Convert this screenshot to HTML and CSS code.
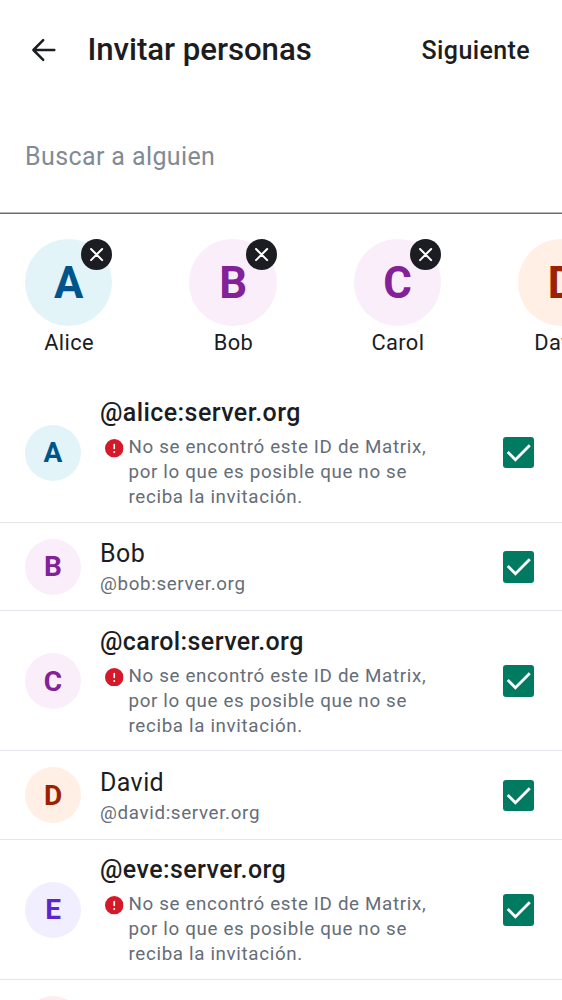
FILE: index.html
```html
<!DOCTYPE html>
<html lang="es">
<head>
<meta charset="utf-8">
<title>Invitar personas</title>
<link rel="stylesheet" href="styles.css">
</head>
<body>
<svg class="symbols" aria-hidden="true">
  <symbol id="close" viewBox="0 0 32 32"><path d="M10.3 10.3 21.7 21.7M21.7 10.3 10.3 21.7" fill="none" stroke="#fff" stroke-width="2.1" stroke-linecap="round"/></symbol>
  <symbol id="error" viewBox="0 0 18 18"><circle cx="9" cy="9" r="9" fill="#d51928"/><path d="M9 5.4V9.2" fill="none" stroke="#fff" stroke-width="1.6" stroke-linecap="round"/><circle cx="9" cy="12.7" r=".95" fill="#fff"/></symbol>
  <symbol id="check" viewBox="0 0 32 32"><path d="M4.8 15.2 12.6 23 27.2 8.4" fill="none" stroke="#fff" stroke-width="2.9"/></symbol>
</svg>
<main class="screen">
  <header class="topbar">
    <svg class="back" viewBox="0 0 26 26" role="img" aria-label="Atrás"><path d="M23.3 13H2.5M12.2 3.2 2.4 13l9.8 9.8" fill="none" stroke="#1b1d22" stroke-width="2.5" stroke-linecap="round" stroke-linejoin="round"/></svg>
    <h1 class="title">Invitar personas</h1>
    <span class="next">Siguiente</span>
  </header>
  <div class="search">Buscar a alguien</div>
  <section class="selected">
    <div class="person"><div class="avatar large blue">A<svg class="remove"><use href="#close"/></svg></div><span class="label">Alice</span></div>
    <div class="person"><div class="avatar large purple">B<svg class="remove"><use href="#close"/></svg></div><span class="label">Bob</span></div>
    <div class="person"><div class="avatar large purple">C<svg class="remove"><use href="#close"/></svg></div><span class="label">Carol</span></div>
    <div class="person"><div class="avatar large orange">D<svg class="remove"><use href="#close"/></svg></div><span class="label">David</span></div>
  </section>
  <section class="list">
    <div class="row tall">
      <div class="avatar blue">A</div>
      <div class="info"><div class="name strong">@alice:server.org</div><div class="warning"><svg class="error"><use href="#error"/></svg><p class="detail">No se encontró este ID de Matrix,<br>por lo que es posible que no se<br>reciba la invitación.</p></div></div>
      <svg class="checkbox"><use href="#check"/></svg>
    </div>
    <div class="row">
      <div class="avatar purple">B</div>
      <div class="info"><div class="name">Bob</div><div class="detail">@bob:server.org</div></div>
      <svg class="checkbox"><use href="#check"/></svg>
    </div>
    <div class="row tall">
      <div class="avatar purple">C</div>
      <div class="info"><div class="name strong">@carol:server.org</div><div class="warning"><svg class="error"><use href="#error"/></svg><p class="detail">No se encontró este ID de Matrix,<br>por lo que es posible que no se<br>reciba la invitación.</p></div></div>
      <svg class="checkbox"><use href="#check"/></svg>
    </div>
    <div class="row">
      <div class="avatar orange">D</div>
      <div class="info"><div class="name">David</div><div class="detail">@david:server.org</div></div>
      <svg class="checkbox"><use href="#check"/></svg>
    </div>
    <div class="row tall">
      <div class="avatar violet">E</div>
      <div class="info"><div class="name strong">@eve:server.org</div><div class="warning"><svg class="error"><use href="#error"/></svg><p class="detail">No se encontró este ID de Matrix,<br>por lo que es posible que no se<br>reciba la invitación.</p></div></div>
      <svg class="checkbox"><use href="#check"/></svg>
    </div>
    <div class="row">
      <div class="avatar pink"></div>
    </div>
  </section>
</main>
</body>
</html>
```
FILE: styles.css
```css
* { box-sizing: border-box; }
body { margin: 0; background: #fff; color: #1b1d22; font-family: Roboto, "Liberation Sans", sans-serif; }
.symbols { position: absolute; width: 0; height: 0; }
.screen { width: 562px; height: 1000px; overflow: hidden; }
.topbar { display: flex; align-items: center; height: 100px; padding: 0 32px 0 30.5px; }
.back { width: 26px; height: 26px; flex: none; }
.title { margin: 0 0 0 31px; font-size: 31.2px; font-weight: 500; line-height: 40px; letter-spacing: -.04px; white-space: nowrap; }
.next { margin-left: auto; padding-top: 1px; font-size: 25px; font-weight: 500; line-height: 29px; letter-spacing: .38px; }
.search { display: flex; align-items: center; height: 114px; padding: 0 25px; border-bottom: 1px solid #656d77; box-shadow: inset 0 -1px #b2b6bb; color: #818a95; font-size: 25px; letter-spacing: .39px; }
.selected { display: flex; gap: 77px; height: 168.5px; padding: 25px 25px 0; overflow: hidden; }
.person { display: flex; flex: none; flex-direction: column; align-items: center; width: 87.4px; }
.label { padding: .4px 0 0 .8px; font-size: 21.85px; line-height: 31px; letter-spacing: .38px; }
.avatar { position: relative; display: flex; flex: none; align-items: center; justify-content: center; width: 56px; height: 56px; border-radius: 50%; font-size: 28px; font-weight: 700; }
.large { width: 87.4px; height: 87.4px; font-size: 43.7px; }
.remove { position: absolute; top: 0; right: 0; width: 31.2px; height: 31.2px; border-radius: 50%; background: #1b1d22; }
.blue { background: #e3f4f9; color: #00548c; }
.purple { background: #faeefb; color: #822198; }
.orange { background: #ffefe4; color: #9b2200; }
.violet { background: #f1efff; color: #5d26cd; }
.pink { background: #ffecf0; }
.row { display: flex; align-items: center; height: 88.2px; padding: .8px 28px 0 25px; border-bottom: 1px solid #e3e6ea; }
.tall { height: 140.4px; }
.info { flex: 1; margin-left: 19px; }
.tall .info { padding-bottom: .8px; }
.name { font-size: 25px; line-height: 36px; letter-spacing: .4px; }
.strong { margin-bottom: 4px; line-height: 37px; letter-spacing: .42px; font-weight: 500; }
.detail { margin: 0; color: #656d77; font-size: 18.75px; line-height: 25px; letter-spacing: .66px; }
.warning { display: flex; gap: 5px; padding-left: 5px; }
.error { width: 18.5px; height: 18.5px; margin-top: 4px; flex: none; }
.checkbox { flex: none; width: 31.5px; height: 31.5px; border-radius: 3px; background: #007a61; }
```
